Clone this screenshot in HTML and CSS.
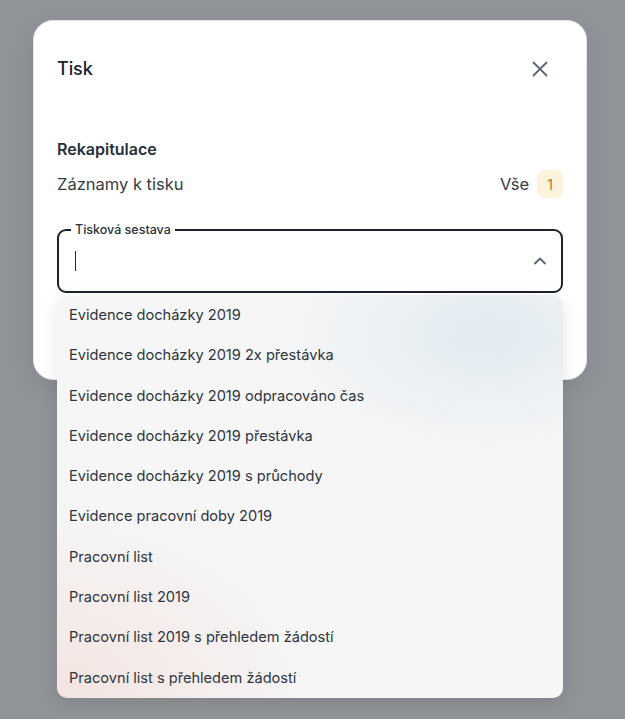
FILE: index.html
```html
<!DOCTYPE html>
<html lang="cs">
<head>
<meta charset="utf-8">
<link rel="stylesheet" href="styles.css">
</head>
<body>
<div class="modal">
  <div class="header">
    <h2 class="title">Tisk</h2>
    <button class="close" aria-label="Zavřít">
      <svg width="20" height="20" viewBox="0 0 20 20"><path d="M3.5 3.5L16.5 16.5M16.5 3.5L3.5 16.5" stroke="#5b6573" stroke-width="1.8" stroke-linecap="round" fill="none"/></svg>
    </button>
  </div>
  <div class="section">
    <h3 class="subtitle">Rekapitulace</h3>
    <div class="row">
      <span class="label">Záznamy k tisku</span>
      <span class="value">Vše <span class="badge">1</span></span>
    </div>
  </div>
  <div class="field">
    <fieldset class="box">
      <legend class="legend">Tisková sestava</legend>
      <span class="caret"></span>
      <svg class="chevron" width="16" height="16" viewBox="0 0 16 16"><path d="M3 10.5L8 5.5L13 10.5" stroke="#5b6573" stroke-width="1.8" stroke-linecap="round" stroke-linejoin="round" fill="none"/></svg>
    </fieldset>
    <ul class="menu">
      <li>Evidence docházky 2019</li>
      <li>Evidence docházky 2019 2x přestávka</li>
      <li>Evidence docházky 2019 odpracováno čas</li>
      <li>Evidence docházky 2019 přestávka</li>
      <li>Evidence docházky 2019 s průchody</li>
      <li>Evidence pracovní doby 2019</li>
      <li>Pracovní list</li>
      <li>Pracovní list 2019</li>
      <li>Pracovní list 2019 s přehledem žádostí</li>
      <li>Pracovní list s přehledem žádostí</li>
    </ul>
  </div>
</div>
</body>
</html>
```
FILE: styles.css
```css
* { box-sizing: border-box; }
html, body { margin: 0; padding: 0; }
body {
  background: #909398;
  font-family: Inter, "Noto Sans", sans-serif;
  color: #1f2937;
  height: 719px;
  overflow: hidden;
  padding: 20px 38px 0 33px;
}
.modal {
  background: #fff;
  border: 1px solid #e3e5e8;
  border-radius: 20px;
  height: 360px;
  padding: 0 23px;
  box-shadow: 0 8px 24px rgba(0,0,0,0.08);
}
.header {
  display: flex;
  justify-content: space-between;
  align-items: center;
  height: 95px;
}
.title {
  margin: 0;
  font-size: 18px;
  font-weight: 500;
  color: #1a202c;
  letter-spacing: -0.1px;
}
.close {
  border: 0;
  background: none;
  padding: 0;
  margin-right: 13px;
  width: 20px;
  height: 20px;
  display: flex;
}
.section { padding-top: 23px; }
.subtitle {
  margin: 0;
  font-size: 16px;
  font-weight: 600;
  color: #27303b;
  line-height: 20px;
}
.row {
  display: flex;
  justify-content: space-between;
  align-items: center;
  margin-top: 10px;
  height: 30px;
}
.label {
  font-size: 16.5px;
  color: #343c47;
}
.value {
  display: flex;
  align-items: center;
  gap: 8px;
  font-size: 16.5px;
  color: #343c47;
}
.badge {
  display: inline-flex;
  align-items: center;
  justify-content: center;
  width: 26px;
  height: 28px;
  border-radius: 8px;
  background: #fdf2dc;
  color: #b7782a;
  font-size: 14px;
}
.field { position: relative; margin-top: 32px; }
.box {
  margin: 0;
  border: 2px solid #1c232d;
  border-radius: 9px;
  height: 70px;
  padding: 0 13px 0 12px;
  display: flex;
  align-items: center;
  justify-content: space-between;
  position: relative;
  top: -8px;
}
.legend {
  font-size: 12.5px;
  font-weight: 500;
  color: #2b333e;
  padding: 0 4px;
  line-height: 14px;
}
.caret {
  display: block;
  width: 1px;
  height: 20px;
  background: #1f2937;
  margin-top: -6px;
  margin-left: 4px;
}
.chevron { margin-top: -6px; }
.menu {
  list-style: none;
  margin: 0;
  padding: 0;
  position: absolute;
  top: 64px;
  left: 0;
  right: 0;
  border-radius: 10px;
  background:
    radial-gradient(ellipse 300px 170px at 85% 10%, rgba(224,234,240,0.95), rgba(224,234,240,0) 70%),
    radial-gradient(ellipse 360px 260px at 0% 100%, rgba(243,228,224,1), rgba(243,228,224,0) 75%),
    #f6f6f7;
  box-shadow: 0 6px 18px rgba(0,0,0,0.10);
}
.menu li {
  font-size: 14.6px;
  color: #2d3540;
  padding: 10px 12px;
  line-height: 20.3px;
}
```
